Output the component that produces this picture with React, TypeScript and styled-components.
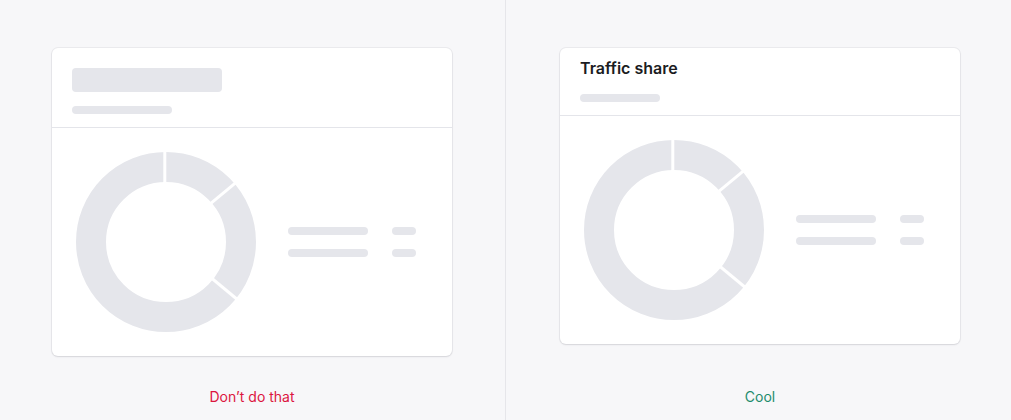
import React from "react";
import styled, { createGlobalStyle } from "styled-components";

const GlobalStyle = createGlobalStyle`
  * { box-sizing: border-box; }
  html, body { margin: 0; padding: 0; }
  body {
    background: #f7f7f9;
    font-family: Inter, "Noto Sans", "Liberation Sans", sans-serif;
    -webkit-font-smoothing: antialiased;
  }
`;

const SKELETON = "#e5e6eb";

const Page = styled.div`
  display: grid;
  grid-template-columns: 505px 1px 1fr;
  width: 1011px;
  height: 420px;
`;

const Divider = styled.div`
  background: #e6e6ea;
`;

const Panel = styled.section<{ $offset?: number }>`
  display: flex;
  flex-direction: column;
  align-items: center;
  padding-top: 48px;
  padding-bottom: 13px;
  padding-left: ${(p) => Math.max(p.$offset ?? 0, 0)}px;
  padding-right: ${(p) => Math.max(-(p.$offset ?? 0), 0)}px;
`;

const Card = styled.div`
  width: 400px;
  background: #ffffff;
  border-radius: 6px;
  box-shadow: 0 0 0 1px rgba(20, 20, 40, 0.05), 0 1px 2px rgba(20, 20, 40, 0.1);
  display: flex;
  flex-direction: column;
`;

const Header = styled.header<{ $top: number; $gap: number }>`
  display: flex;
  flex-direction: column;
  align-items: flex-start;
  gap: ${(p) => p.$gap}px;
  padding: ${(p) => p.$top}px 20px 13px;
  border-bottom: 1px solid #e4e5ea;
`;

const Bar = styled.div<{ $w: number; $h?: number; $r?: number }>`
  width: ${(p) => p.$w}px;
  height: ${(p) => p.$h ?? 8}px;
  border-radius: ${(p) => p.$r ?? 4}px;
  background: ${SKELETON};
`;

const Title = styled.h3`
  margin: 0;
  font-size: 16px;
  line-height: 20px;
  font-weight: 600;
  color: #1b1c22;
`;

const Body = styled.div`
  display: flex;
  align-items: center;
  gap: 32px;
  padding: 24px;
`;

const Legend = styled.div`
  display: flex;
  flex-direction: column;
  gap: 14px;
`;

const LegendRow = styled.div`
  display: flex;
  gap: 24px;
`;

const Label = styled.div<{ $color: string }>`
  margin-top: auto;
  font-size: 14px;
  line-height: 20px;
  color: ${(p) => p.$color};
`;

const Donut: React.FC = () => {
  const c = 90;
  const angles = [0, 50.4, 129.6];
  return (
    <svg width="180" height="180" viewBox="0 0 180 180" style={{ flexShrink: 0 }}>
      <circle cx={c} cy={c} r={75} fill="none" stroke={SKELETON} strokeWidth={30} />
      {angles.map((a) => {
        const rad = (a * Math.PI) / 180;
        const x1 = c + 56 * Math.sin(rad) - 1.2 * Math.cos(rad);
        const y1 = c - 56 * Math.cos(rad) - 1.2 * Math.sin(rad);
        const x2 = c + 94 * Math.sin(rad) - 1.2 * Math.cos(rad);
        const y2 = c - 94 * Math.cos(rad) - 1.2 * Math.sin(rad);
        return <line key={a} x1={x1} y1={y1} x2={x2} y2={y2} stroke="#ffffff" strokeWidth={3} />;
      })}
    </svg>
  );
};

const ChartBody: React.FC = () => (
  <Body>
    <Donut />
    <Legend>
      <LegendRow>
        <Bar $w={80} />
        <Bar $w={24} />
      </LegendRow>
      <LegendRow>
        <Bar $w={80} />
        <Bar $w={24} />
      </LegendRow>
    </Legend>
  </Body>
);

export default function App() {
  return (
    <>
      <GlobalStyle />
      <Page>
        <Panel $offset={-1}>
          <Card>
            <Header $top={20} $gap={14}>
              <Bar $w={150} $h={24} $r={4} />
              <Bar $w={100} />
            </Header>
            <ChartBody />
          </Card>
          <Label $color="#dc163f">Don’t do that</Label>
        </Panel>
        <Divider />
        <Panel $offset={3}>
          <Card>
            <Header $top={10} $gap={16}>
              <Title>Traffic share</Title>
              <Bar $w={80} />
            </Header>
            <ChartBody />
          </Card>
          <Label $color="#1d8c6c">Cool</Label>
        </Panel>
      </Page>
    </>
  );
}
